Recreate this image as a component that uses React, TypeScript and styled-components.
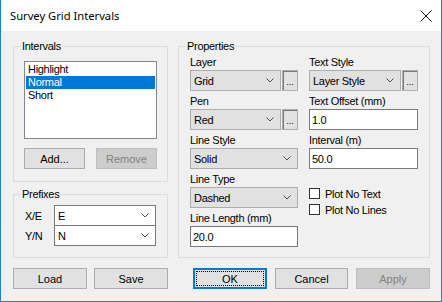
import React from 'react'
import styled, { createGlobalStyle, css } from 'styled-components'

const GlobalStyle = createGlobalStyle`
  html, body {
    margin: 0;
    padding: 0;
    background: #ffffff;
  }
  * { box-sizing: border-box; }
`

const Window = styled.div`
  width: 442px;
  height: 302px;
  display: flex;
  flex-direction: column;
  border: 1px solid #1883d7;
  border-top: none;
  font-family: 'Liberation Sans', Arial, sans-serif;
  font-size: 11px;
  letter-spacing: -0.3px;
  color: #000;
`

const TitleBar = styled.div`
  height: 31px;
  flex: none;
  background: #fff;
  display: flex;
  align-items: center;
  justify-content: space-between;
  padding: 0 9px 0 9px;
  font-family: 'Noto Sans', 'Segoe UI', sans-serif;
  font-size: 11.2px;
  letter-spacing: 0;
`

const CloseIcon = () => (
  <svg width="12" height="12" viewBox="0 0 12 12">
    <path d="M0.5 0.5 L11.5 11.5 M11.5 0.5 L0.5 11.5" stroke="#111" strokeWidth="1" fill="none" />
  </svg>
)

const Client = styled.div`
  flex: 1;
  background: #f0f0f0;
  padding: 15px 11px 0 12px;
  display: grid;
  grid-template-columns: 155px 252px;
  grid-template-rows: 212px 21px;
  column-gap: 10px;
  row-gap: 10px;
`

const Column = styled.div`
  display: flex;
  flex-direction: column;
  gap: 12px;
`

const Group = styled.div<{ $h: number }>`
  position: relative;
  height: ${p => p.$h}px;
  border: 1px solid #dcdcdc;
`

const Legend = styled.span`
  position: absolute;
  top: -7px;
  left: 7px;
  padding: 0 1px;
  line-height: 13px;
  background: #f0f0f0;
`

const IntervalsBody = styled.div`
  padding: 14px 10px 0 10px;
  display: flex;
  flex-direction: column;
  gap: 9px;
`

const ListBox = styled.div`
  height: 78px;
  background: #fff;
  border: 1px solid #828790;
  padding: 1px;
`

const ListItem = styled.div<{ $selected?: boolean }>`
  height: 13px;
  line-height: 13px;
  padding-left: 2px;
  ${p => p.$selected && css`
    background: #0078d7;
    color: #fff;
  `}
`

const ButtonRow = styled.div`
  display: flex;
  justify-content: space-between;
`

const Button = styled.button<{ $w: number; $default?: boolean }>`
  position: relative;
  width: ${p => p.$w}px;
  height: 21px;
  padding: 0;
  background: #e1e1e1;
  border: 1px solid #adadad;
  font: inherit;
  color: #000;
  &:disabled {
    background: #cccccc;
    border-color: #bfbfbf;
    color: #838383;
  }
  ${p => p.$default && css`
    border: 2px solid #0078d7;
    &::after {
      content: '';
      position: absolute;
      inset: 1px;
      border: 1px dotted #000;
    }
  `}
`

const PrefixBody = styled.div`
  padding: 10px 11px 0 11px;
  display: grid;
  grid-template-columns: 29px 102px;
  grid-auto-rows: 21px;
  row-gap: 0;
  & > :nth-child(n + 3) { margin-top: -1px; }
`

const RowLabel = styled.span`
  display: flex;
  align-items: center;
`

const ComboBox = styled.div<{ $editable?: boolean }>`
  flex: 1;
  height: 21px;
  display: flex;
  align-items: center;
  justify-content: space-between;
  padding: 0 6px 0 3px;
  background: ${p => (p.$editable ? '#ffffff' : '#e1e1e1')};
  border: 1px solid ${p => (p.$editable ? '#7a7a7a' : '#adadad')};
`

const Chevron = () => (
  <svg width="8" height="5" viewBox="0 0 8 5">
    <path d="M0.5 0.5 L4 4 L7.5 0.5" stroke="#505050" strokeWidth="1" fill="none" />
  </svg>
)

const EllipsisButton = styled.div`
  width: 16px;
  height: 21px;
  margin-left: 1px;
  flex: none;
  background: #e1e1e1;
  border: 1px solid #adadad;
  box-shadow: inset 1px 1px 0 #7a7a7a;
  display: flex;
  align-items: flex-end;
  justify-content: center;
  padding-bottom: 3px;
  font-size: 9px;
  line-height: 9px;
  letter-spacing: 0;
`

const PropsBody = styled.div`
  padding: 9px 11px 0 11px;
  display: grid;
  grid-template-columns: 108px 109px;
  column-gap: 11px;
`

const FieldColumn = styled.div`
  display: flex;
  flex-direction: column;
  gap: 4px;
`

const Field = styled.div`
  display: flex;
  flex-direction: column;
`

const FieldLabel = styled.span`
  line-height: 13px;
  margin-bottom: 1px;
`

const ControlRow = styled.div`
  display: flex;
`

const TextBox = styled.div`
  height: 21px;
  background: #fff;
  border: 1px solid #7a7a7a;
  padding-left: 2px;
  display: flex;
  align-items: center;
`

const CheckList = styled.div`
  margin-top: 14px;
  display: flex;
  flex-direction: column;
  gap: 3px;
`

const CheckRow = styled.label`
  display: flex;
  align-items: center;
  height: 13px;
  gap: 5px;
`

const CheckBox = styled.span`
  width: 11px;
  height: 11px;
  background: #fff;
  border: 1px solid #333;
`

const FooterRight = styled.div`
  display: flex;
  justify-content: flex-end;
  gap: 8px;
`

type Combo = { label: string; value: string; more?: boolean }

const ComboField = ({ label, value, more }: Combo) => (
  <Field>
    <FieldLabel>{label}</FieldLabel>
    <ControlRow>
      <ComboBox>
        <span>{value}</span>
        <Chevron />
      </ComboBox>
      {more && <EllipsisButton>...</EllipsisButton>}
    </ControlRow>
  </Field>
)

const TextField = ({ label, value }: { label: string; value: string }) => (
  <Field>
    <FieldLabel>{label}</FieldLabel>
    <TextBox>{value}</TextBox>
  </Field>
)

export default function App() {
  return (
    <>
      <GlobalStyle />
      <Window>
        <TitleBar>
          <span>Survey Grid Intervals</span>
          <CloseIcon />
        </TitleBar>
        <Client>
          <Column>
            <Group $h={136}>
              <Legend>Intervals</Legend>
              <IntervalsBody>
                <ListBox>
                  <ListItem>Highlight</ListItem>
                  <ListItem $selected>Normal</ListItem>
                  <ListItem>Short</ListItem>
                </ListBox>
                <ButtonRow>
                  <Button $w={61}>Add...</Button>
                  <Button $w={61} disabled>Remove</Button>
                </ButtonRow>
              </IntervalsBody>
            </Group>
            <Group $h={64}>
              <Legend>Prefixes</Legend>
              <PrefixBody>
                <RowLabel>X/E</RowLabel>
                <ComboBox $editable>
                  <span>E</span>
                  <Chevron />
                </ComboBox>
                <RowLabel>Y/N</RowLabel>
                <ComboBox $editable>
                  <span>N</span>
                  <Chevron />
                </ComboBox>
              </PrefixBody>
            </Group>
          </Column>
          <Group $h={212}>
            <Legend>Properties</Legend>
            <PropsBody>
              <FieldColumn>
                <ComboField label="Layer" value="Grid" more />
                <ComboField label="Pen" value="Red" more />
                <ComboField label="Line Style" value="Solid" />
                <ComboField label="Line Type" value="Dashed" />
                <TextField label="Line Length (mm)" value="20.0" />
              </FieldColumn>
              <FieldColumn>
                <ComboField label="Text Style" value="Layer Style" more />
                <TextField label="Text Offset (mm)" value="1.0" />
                <TextField label="Interval (m)" value="50.0" />
                <CheckList>
                  <CheckRow><CheckBox />Plot No Text</CheckRow>
                  <CheckRow><CheckBox />Plot No Lines</CheckRow>
                </CheckList>
              </FieldColumn>
            </PropsBody>
          </Group>
          <ButtonRow>
            <Button $w={74}>Load</Button>
            <Button $w={74}>Save</Button>
          </ButtonRow>
          <FooterRight>
            <Button $w={74} $default>OK</Button>
            <Button $w={73}>Cancel</Button>
            <Button $w={74} disabled>Apply</Button>
          </FooterRight>
        </Client>
      </Window>
    </>
  )
}
